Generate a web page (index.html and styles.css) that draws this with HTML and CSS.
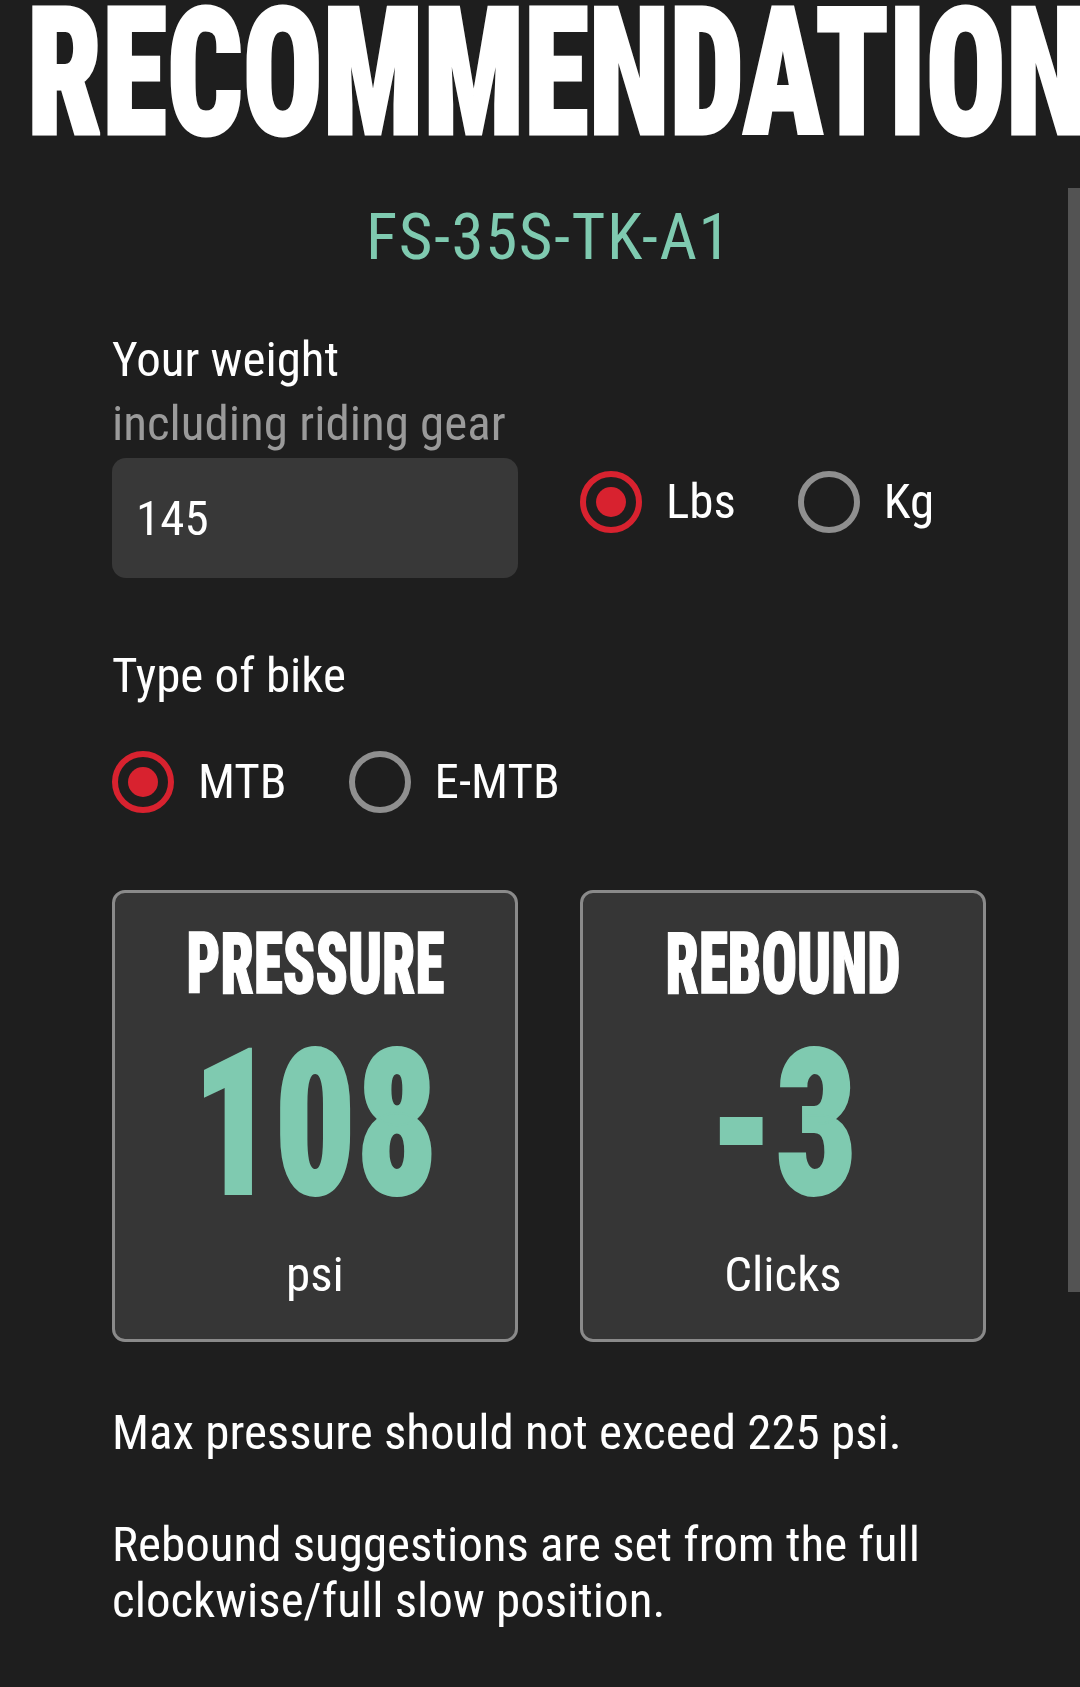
FILE: index.html
```
<!DOCTYPE html>
<html>
<head>
    <meta charset="UTF-8">
    <link rel="stylesheet" href="styles.css">
</head>
<body>
<h1 class="page-title"><span>RECOMMENDATION</span></h1>

<div class="scroll-thumb"></div>

<div class="content">

    <div class="model">FS-35S-TK-A1</div>

    <div class="weight-row">
        <div class="weight-left">
            <div class="label">Your weight</div>
            <div class="label sub">including riding gear</div>
            <input class="weight-input" type="text" value="145">
        </div>
        <div class="radio-group unit-group">
            <label class="radio checked"><span class="dot"></span>Lbs</label>
            <label class="radio"><span class="dot"></span>Kg</label>
        </div>
    </div>

    <div class="label bike-label">Type of bike</div>
    <div class="radio-group bike-group">
        <label class="radio checked"><span class="dot"></span>MTB</label>
        <label class="radio"><span class="dot"></span>E-MTB</label>
    </div>

    <div class="cards">
        <div class="card">
            <div class="card-title"><span>PRESSURE</span></div>
            <div class="card-value"><span>108</span></div>
            <div class="card-unit">psi</div>
        </div>
        <div class="card">
            <div class="card-title"><span>REBOUND</span></div>
            <div class="card-value"><span>-3</span></div>
            <div class="card-unit">Clicks</div>
        </div>
    </div>

    <div class="notes">
        <p>Max pressure should not exceed 225 psi.</p>
        <p>Rebound suggestions are set from the full clockwise/full slow position.</p>
    </div>

</div>
</body>
</html>
```
FILE: styles.css
```
* {
    margin: 0;
    padding: 0;
    box-sizing: border-box;
}

body {
    background-color: #1e1e1e;
    color: #ffffff;
    font-family: Roboto, "Liberation Sans", sans-serif;
    font-stretch: 87.5%;
    font-size: 49px;
    line-height: 64px;
    overflow: hidden;
    position: relative;
}

.page-title {
    font-size: 178px;
    font-weight: 900;
    font-stretch: 75%;
    line-height: 146px;
    white-space: nowrap;
    padding-left: 27px;
    -webkit-text-stroke: 3px #ffffff;
}

.page-title span {
    display: inline-block;
    transform: scaleX(0.745);
    transform-origin: left center;
}

.scroll-thumb {
    position: absolute;
    top: 188px;
    right: 0;
    width: 12px;
    height: 1104px;
    background-color: #535353;
}

.content {
    margin: 0 94px 0 112px;
}

.model {
    margin-top: 51px;
    text-align: center;
    font-size: 65px;
    line-height: 80px;
    letter-spacing: 1.5px;
    color: #7fcab0;
}

.weight-row {
    display: grid;
    grid-template-columns: 406px 1fr;
    column-gap: 62px;
    align-items: end;
    margin-top: 51px;
}

.label.sub {
    color: #9a9a9a;
}

.weight-input {
    display: block;
    width: 100%;
    height: 120px;
    margin-top: 2px;
    padding: 0 24px;
    border: none;
    border-radius: 14px;
    background-color: #383838;
    color: #ffffff;
    font-family: inherit;
    font-stretch: inherit;
    font-size: 49px;
    outline: none;
}

.radio-group {
    display: flex;
    gap: 62px;
}

.unit-group {
    margin-bottom: 45px;
}

.radio {
    display: flex;
    align-items: center;
    gap: 24px;
    height: 62px;
}

.radio .dot {
    width: 62px;
    height: 62px;
    border-radius: 50%;
    border: 6px solid #8f8f8f;
    display: flex;
    align-items: center;
    justify-content: center;
}

.radio.checked .dot {
    border-color: #d8222f;
}

.radio.checked .dot::after {
    content: "";
    width: 30px;
    height: 30px;
    border-radius: 50%;
    background-color: #d8222f;
}

.bike-label {
    margin-top: 66px;
}

.bike-group {
    margin-top: 43px;
}

.cards {
    display: grid;
    grid-template-columns: 1fr 1fr;
    column-gap: 62px;
    margin-top: 77px;
}

.card {
    border: 3px solid #8a8a8a;
    border-radius: 13px;
    background-color: #363636;
    padding: 26px 0 32px;
    text-align: center;
}

.card-title {
    font-size: 85px;
    font-weight: 900;
    font-stretch: 75%;
    line-height: 90px;
    -webkit-text-stroke: 1.5px #ffffff;
}

.card-title span,
.card-value span {
    display: inline-block;
    transform: scaleX(0.695);
}

.card-value {
    margin-top: 15px;
    font-size: 205px;
    font-weight: 900;
    font-stretch: 75%;
    line-height: 200px;
    color: #7fcab0;
    -webkit-text-stroke: 2px #7fcab0;
}

.card-value span {
    transform: scaleX(0.78);
}

.card-unit {
    margin-top: 19px;
}

.notes {
    margin-top: 63px;
    line-height: 56px;
}

.notes p + p {
    margin-top: 56px;
}
```
